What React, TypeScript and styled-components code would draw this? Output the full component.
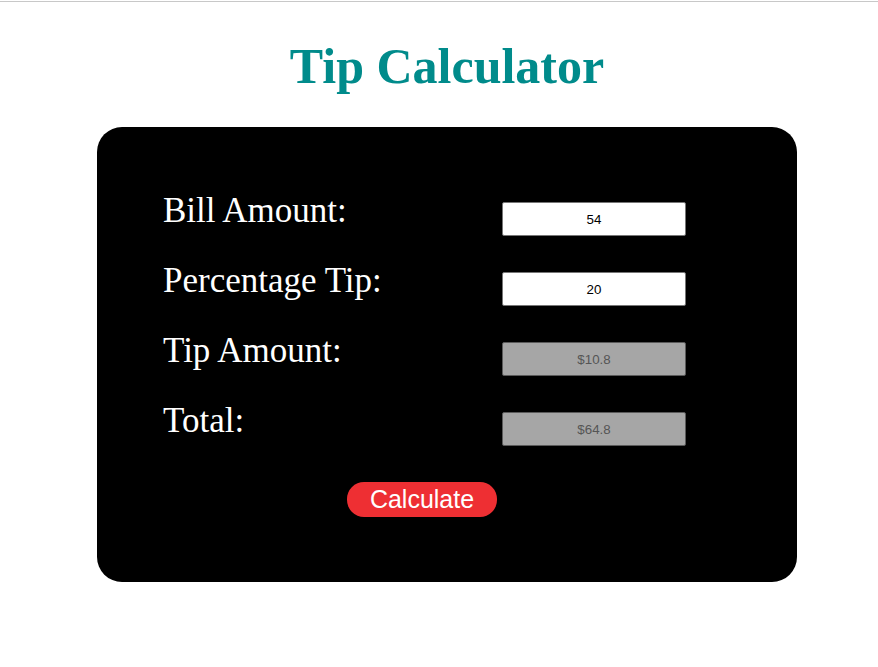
import React, { useState } from "react";
import styled, { createGlobalStyle } from "styled-components";

const GlobalStyle = createGlobalStyle`
  html, body {
    margin: 0;
    padding: 0;
    background: #ffffff;
  }
  body {
    font-family: "Liberation Serif", "Times New Roman", serif;
  }
`;

const TopRule = styled.div`
  height: 1px;
  margin-top: 1px;
  background: #c8c8c8;
`;

const Page = styled.main`
  padding-left: 16px;
  padding-bottom: 40px;
`;

const Title = styled.h1`
  margin: 36px 0 0;
  font-family: "Liberation Serif", "Times New Roman", serif;
  font-weight: bold;
  font-size: 50px;
  line-height: 56px;
  color: #008b8b;
  text-align: center;
`;

const Card = styled.section`
  width: 700px;
  box-sizing: border-box;
  margin: 33px auto 0;
  padding: 65px 0 65px 66px;
  background: #000000;
  border-radius: 25px;
`;

const Row = styled.div`
  display: grid;
  grid-template-columns: 339px 184px;
  align-items: start;
  height: 70px;
`;

const Label = styled.label`
  font-family: "Liberation Serif", "Times New Roman", serif;
  font-size: 35px;
  line-height: 38px;
  color: #ffffff;
`;

const Field = styled.input<{ $readOnly?: boolean }>`
  box-sizing: border-box;
  width: 184px;
  height: 34px;
  margin-top: 10px;
  border: 1px solid ${(p) => (p.$readOnly ? "#5a5a5a" : "#767676")};
  border-radius: 2px;
  background: ${(p) => (p.$readOnly ? "#a6a6a6" : "#ffffff")};
  color: ${(p) => (p.$readOnly ? "#555555" : "#000000")};
  font-family: "Liberation Sans", Arial, sans-serif;
  font-size: 13.33px;
  text-align: center;
  padding: 0 2px;
  outline: none;
`;

const ButtonRow = styled.div`
  padding-left: 184px;
  padding-top: 10px;
`;

const CalcButton = styled.button`
  box-sizing: border-box;
  width: 150px;
  height: 35px;
  border: none;
  border-radius: 17px;
  background: #ee2f33;
  color: #ffffff;
  font-family: "Liberation Sans", Arial, sans-serif;
  font-size: 25px;
  line-height: 35px;
  padding: 0;
  cursor: pointer;
`;

export default function App() {
  const [bill, setBill] = useState("54");
  const [pct, setPct] = useState("20");
  const [tip, setTip] = useState("$10.8");
  const [total, setTotal] = useState("$64.8");

  const calculate = () => {
    const b = parseFloat(bill) || 0;
    const p = parseFloat(pct) || 0;
    const t = (b * p) / 100;
    setTip(`$${Math.round(t * 100) / 100}`);
    setTotal(`$${Math.round((b + t) * 100) / 100}`);
  };

  return (
    <>
      <GlobalStyle />
      <TopRule />
      <Page>
        <Title>Tip Calculator</Title>
        <Card>
          <Row>
            <Label htmlFor="bill">Bill Amount:</Label>
            <Field id="bill" value={bill} onChange={(e) => setBill(e.target.value)} />
          </Row>
          <Row>
            <Label htmlFor="pct">Percentage Tip:</Label>
            <Field id="pct" value={pct} onChange={(e) => setPct(e.target.value)} />
          </Row>
          <Row>
            <Label htmlFor="tip">Tip Amount:</Label>
            <Field id="tip" value={tip} readOnly $readOnly />
          </Row>
          <Row>
            <Label htmlFor="total">Total:</Label>
            <Field id="total" value={total} readOnly $readOnly />
          </Row>
          <ButtonRow>
            <CalcButton onClick={calculate}>Calculate</CalcButton>
          </ButtonRow>
        </Card>
      </Page>
    </>
  );
}
